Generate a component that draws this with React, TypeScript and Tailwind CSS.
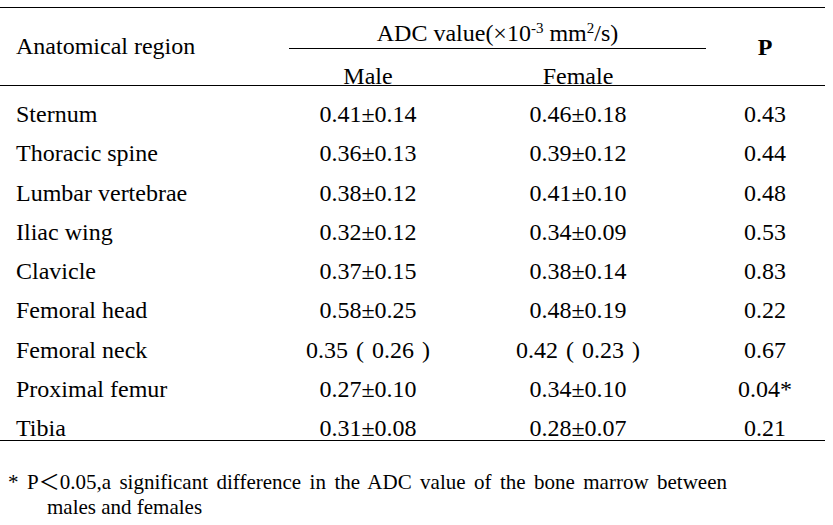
import React from "react";

const cjk = "font-['Noto_Sans_CJK_SC',sans-serif]";

const rows: [string, string, string, string][] = [
  ["Sternum", "0.41±0.14", "0.46±0.18", "0.43"],
  ["Thoracic spine", "0.36±0.13", "0.39±0.12", "0.44"],
  ["Lumbar vertebrae", "0.38±0.12", "0.41±0.10", "0.48"],
  ["Iliac wing", "0.32±0.12", "0.34±0.09", "0.53"],
  ["Clavicle", "0.37±0.15", "0.38±0.14", "0.83"],
  ["Femoral head", "0.58±0.25", "0.48±0.19", "0.22"],
  ["Femoral neck", "0.35 ( 0.26 )", "0.42 ( 0.23 )", "0.67"],
  ["Proximal femur", "0.27±0.10", "0.34±0.10", "0.04*"],
  ["Tibia", "0.31±0.08", "0.28±0.07", "0.21"],
];

export default function App() {
  return (
    <div className="w-[833px] h-[525px] bg-white text-black overflow-hidden font-['Liberation_Serif','Times_New_Roman',serif]">
      <div className="pt-[7px] w-[825px] text-[24px] leading-[24px]">
        <div className="h-px bg-black" />
        {/* header */}
        <div className="flex h-[78px] border-b border-black">
          <div className="w-[268px] pl-[16px] pt-[26px]">Anatomical region</div>
          <div className="w-[420px] pt-[13px]">
            <div className="ml-[21px] w-[417px] text-center whitespace-nowrap">
              ADC value(×10
              <span className="text-[15px] relative -top-[8px]">-3</span>
              {" "}mm
              <span className="text-[15px] relative -top-[8px]">2</span>
              /s)
            </div>
            <div className="ml-[21px] w-[417px] h-px bg-black" />
            <div className="mt-[15px] flex">
              <div className="w-[200px] text-center">Male</div>
              <div className="w-[220px] text-center">Female</div>
            </div>
          </div>
          <div className="w-[137px] pl-[17px] pt-[27px] text-center font-bold">P</div>
        </div>
        {/* body */}
        <div className="pt-[16px] flex flex-col gap-[15.25px] border-b border-black">
          {rows.map((r) => (
            <div key={r[0]} className="flex h-[24px] whitespace-pre">
              <div className="w-[268px] pl-[16px]">{r[0]}</div>
              <div className="w-[200px] text-center [word-spacing:2px]">{r[1]}</div>
              <div className="w-[220px] text-center [word-spacing:2px]">{r[2]}</div>
              <div className="w-[137px] pl-[17px] text-center">{r[3]}</div>
            </div>
          ))}
        </div>
      </div>
      {/* footnote */}
      <div className="mt-[27px] pl-[8px] text-[21px] leading-[25px]">
        <div className="w-[719px] text-justify [text-align-last:justify] whitespace-nowrap">
          * P<span className={cjk}>＜</span>0.05,a significant difference in the ADC value of the bone marrow between
        </div>
        <div className="pl-[39px]">males and females</div>
      </div>
    </div>
  );
}
